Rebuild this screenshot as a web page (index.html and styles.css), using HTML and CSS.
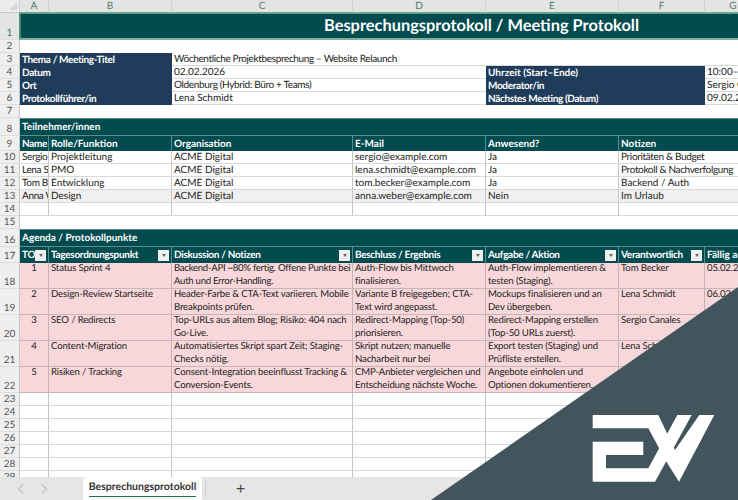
FILE: index.html
```html
<!DOCTYPE html>
<html lang="de">
  <head>
    <meta charset="UTF-8" />
    <meta name="viewport" content="width=device-width, initial-scale=1.0" />
    <title>Besprechungsprotokoll</title>
    <link rel="stylesheet" href="styles.css">
  </head>
  <body>
    <div class="sheet">
      <table class="grid">
        <colgroup>
          <col class="col-rh" /><col class="col-a" /><col class="col-b" /><col class="col-c" />
          <col class="col-d" /><col class="col-e" /><col class="col-f" /><col class="col-g" /><col class="col-h" />
        </colgroup>
        <tr class="h13">
          <th class="corner"><span class="corner-mark"></span></th>
          <th class="ch">A</th><th class="ch">B</th><th class="ch">C</th><th class="ch">D</th>
          <th class="ch">E</th><th class="ch">F</th><th class="ch">G</th><th class="ch">H</th>
        </tr>
        <tr class="h27">
          <th class="rh rh-on">1</th>
          <td colspan="8" class="title">Besprechungsprotokoll / Meeting Protokoll</td>
        </tr>
        <tr class="h12"><th class="rh">2</th><td colspan="8" class="blank"></td></tr>
        <tr class="h13">
          <th class="rh">3</th>
          <td colspan="2" class="navy">Thema / Meeting-Titel</td>
          <td colspan="6" class="val tight">Wöchentliche Projektbesprechung – Website Relaunch</td>
        </tr>
        <tr class="h13">
          <th class="rh">4</th>
          <td colspan="2" class="navy">Datum</td>
          <td colspan="2" class="val">02.02.2026</td>
          <td colspan="2" class="navy navy-plain">Uhrzeit (Start–Ende)</td>
          <td colspan="2" class="val">10:00–11:00</td>
        </tr>
        <tr class="h13">
          <th class="rh">5</th>
          <td colspan="2" class="navy">Ort</td>
          <td colspan="2" class="val tight">Oldenburg (Hybrid: Büro + Teams)</td>
          <td colspan="2" class="navy">Moderator/in</td>
          <td colspan="2" class="val">Sergio Canales</td>
        </tr>
        <tr class="h13">
          <th class="rh">6</th>
          <td colspan="2" class="navy">Protokollführer/in</td>
          <td colspan="2" class="val">Lena Schmidt</td>
          <td colspan="2" class="navy">Nächstes Meeting (Datum)</td>
          <td colspan="2" class="val">09.02.2026</td>
        </tr>
        <tr class="h13"><th class="rh">7</th><td colspan="8" class="blank"></td></tr>

        <tr class="h18"><th class="rh">8</th><td colspan="8" class="section">Teilnehmer/innen</td></tr>
        <tr class="h15">
          <th class="rh">9</th>
          <td class="head tight">Name</td><td class="head">Rolle/Funktion</td><td class="head">Organisation</td>
          <td class="head">E-Mail</td><td class="head">Anwesend?</td><td colspan="3" class="head">Notizen</td>
        </tr>
        <tr class="h13">
          <th class="rh">10</th>
          <td class="tight">Sergio Canales</td><td>Projektleitung</td><td>ACME Digital</td><td>sergio@example.com</td>
          <td>Ja</td><td colspan="3" class="tight">Prioritäten &amp; Budget</td>
        </tr>
        <tr class="h13">
          <th class="rh">11</th>
          <td class="tight">Lena Schmidt</td><td>PMO</td><td>ACME Digital</td><td>lena.schmidt@example.com</td>
          <td>Ja</td><td colspan="3" class="tight">Protokoll &amp; Nachverfolgung</td>
        </tr>
        <tr class="h13">
          <th class="rh">12</th>
          <td class="tight">Tom Becker</td><td>Entwicklung</td><td>ACME Digital</td><td>tom.becker@example.com</td>
          <td>Ja</td><td colspan="3">Backend / Auth</td>
        </tr>
        <tr class="h13 alt">
          <th class="rh">13</th>
          <td class="tight">Anna Weber</td><td>Design</td><td>ACME Digital</td><td>anna.weber@example.com</td>
          <td>Nein</td><td colspan="3">Im Urlaub</td>
        </tr>
        <tr class="h13">
          <th class="rh">14</th>
          <td></td><td></td><td></td><td></td><td></td><td colspan="3"></td>
        </tr>
        <tr class="h13"><th class="rh">15</th><td colspan="8" class="blank"></td></tr>

        <tr class="h18"><th class="rh">16</th><td colspan="8" class="section">Agenda / Protokollpunkte</td></tr>
        <tr class="h16">
          <th class="rh">17</th>
          <td class="head"><div class="filter-cell"><span class="filter-label">TOP</span><span class="filter-btn"></span></div></td>
          <td class="head"><div class="filter-cell"><span class="filter-label">Tagesordnungspunkt</span><span class="filter-btn"></span></div></td>
          <td class="head"><div class="filter-cell"><span class="filter-label">Diskussion / Notizen</span><span class="filter-btn"></span></div></td>
          <td class="head"><div class="filter-cell"><span class="filter-label">Beschluss / Ergebnis</span><span class="filter-btn"></span></div></td>
          <td class="head"><div class="filter-cell"><span class="filter-label">Aufgabe / Aktion</span><span class="filter-btn"></span></div></td>
          <td class="head"><div class="filter-cell"><span class="filter-label">Verantwortlich</span><span class="filter-btn"></span></div></td>
          <td class="head">Fällig am</td>
          <td class="head"></td>
        </tr>
        <tr class="h25 item">
          <th class="rh">18</th>
          <td class="num">1</td><td>Status Sprint 4</td>
          <td class="tight">Backend-API ~80% fertig. Offene Punkte bei<br>Auth und Error-Handling.</td>
          <td>Auth-Flow bis Mittwoch<br>finalisieren.</td>
          <td>Auth-Flow implementieren &amp;<br>testen (Staging).</td>
          <td>Tom Becker</td><td>05.02.2026</td><td></td>
        </tr>
        <tr class="h25 item">
          <th class="rh">19</th>
          <td class="num">2</td><td>Design-Review Startseite</td>
          <td>Header-Farbe &amp; CTA-Text variieren. Mobile<br>Breakpoints prüfen.</td>
          <td>Variante B freigegeben; CTA-<br>Text wird angepasst.</td>
          <td>Mockups finalisieren und an<br>Dev übergeben.</td>
          <td>Lena Schmidt</td><td>06.02.2026</td><td></td>
        </tr>
        <tr class="h25 item">
          <th class="rh">20</th>
          <td class="num">3</td><td>SEO / Redirects</td>
          <td>Top-URLs aus altem Blog; Risiko: 404 nach<br>Go-Live.</td>
          <td>Redirect-Mapping (Top-50)<br>priorisieren.</td>
          <td>Redirect-Mapping erstellen<br>(Top-50 URLs zuerst).</td>
          <td>Sergio Canales</td><td>06.02.2026</td><td></td>
        </tr>
        <tr class="h25 item">
          <th class="rh">21</th>
          <td class="num">4</td><td>Content-Migration</td>
          <td>Automatisiertes Skript spart Zeit; Staging-<br>Checks nötig.</td>
          <td>Skript nutzen; manuelle<br>Nacharbeit nur bei</td>
          <td>Export testen (Staging) und<br>Prüfliste erstellen.</td>
          <td>Lena Schmidt</td><td>07.02.2026</td><td></td>
        </tr>
        <tr class="h25 item">
          <th class="rh">22</th>
          <td class="num">5</td><td>Risiken / Tracking</td>
          <td>Consent-Integration beeinflusst Tracking &amp;<br>Conversion-Events.</td>
          <td>CMP-Anbieter vergleichen und<br>Entscheidung nächste Woche.</td>
          <td>Angebote einholen und<br>Optionen dokumentieren.</td>
          <td>Sergio Canales</td><td>08.02.2026</td><td></td>
        </tr>
        <tr class="h13"><th class="rh">23</th><td></td><td></td><td></td><td></td><td></td><td></td><td></td><td></td></tr>
        <tr class="h13"><th class="rh">24</th><td></td><td></td><td></td><td></td><td></td><td></td><td></td><td></td></tr>
        <tr class="h13"><th class="rh">25</th><td></td><td></td><td></td><td></td><td></td><td></td><td></td><td></td></tr>
        <tr class="h13"><th class="rh">26</th><td></td><td></td><td></td><td></td><td></td><td></td><td></td><td></td></tr>
        <tr class="h13"><th class="rh">27</th><td></td><td></td><td></td><td></td><td></td><td></td><td></td><td></td></tr>
        <tr class="h13"><th class="rh">28</th><td></td><td></td><td></td><td></td><td></td><td></td><td></td><td></td></tr>
        <tr class="h13"><th class="rh">29</th><td></td><td></td><td></td><td></td><td></td><td></td><td></td><td></td></tr>
      </table>
    </div>

    <div class="tabbar">
      <svg class="tab-arrow" width="8" height="12" viewBox="0 0 8 12"><path d="M6 1.5 1.5 6 6 10.5" /></svg>
      <svg class="tab-arrow tab-arrow-next" width="8" height="12" viewBox="0 0 8 12"><path d="M2 1.5 6.5 6 2 10.5" /></svg>
      <div class="tab"><span class="tab-label">Besprechungsprotokoll</span></div>
      <span class="tab-sep"></span>
      <span class="tab-add">+</span>
    </div>

    <svg class="brand" viewBox="0 0 738 500" width="738" height="500">
      <polygon class="brand-bg" points="738,287 738,500 431,500" />
      <polygon class="brand-mark" points="592.7,441.7 643.3,441.7 643.3,455 606,455 606,468.3 648.3,468.3 677.3,415 691.7,415 655,481.7 592.7,481.7" />
      <polygon class="brand-mark" points="592.7,415 658.3,415 675,450 699.3,415 714.3,415 679,481.7 667.3,463.3 648.3,428.3 592.7,428.3" />
    </svg>
  </body>
</html>
```

FILE: styles.css
```css
html,
body {
  margin: 0;
  height: 500px;
  overflow: hidden;
}

body {
  display: flex;
  flex-direction: column;
  width: 738px;
  font-family: Lato, "Liberation Sans", sans-serif;
  font-size: 10px;
  color: #222;
  background-color: #fff;
  text-rendering: geometricPrecision;
}

.sheet {
  flex: 1;
  min-height: 0;
  overflow: hidden;
}

.grid {
  table-layout: fixed;
  width: 942px;
  border-collapse: separate;
  border-spacing: 0;
}

.col-rh { width: 20px; }
.col-a { width: 29px; }
.col-b { width: 123px; }
.col-c { width: 181px; }
.col-d { width: 133px; }
.col-e { width: 133px; }
.col-f { width: 86px; }
.col-g { width: 57px; }
.col-h { width: 180px; }

.h12 { height: 12px; }
.h13 { height: 13px; }
.h15 { height: 15px; }
.h16 { height: 16px; }
.h18 { height: 18px; }
.h25 { height: 25px; }
.h27 { height: 27px; }

td,
th {
  box-sizing: border-box;
  padding: 0 2px;
  line-height: 12px;
  font-weight: normal;
  white-space: nowrap;
  overflow: hidden;
}

td {
  border-right: 1px solid #c6c6c6;
  border-bottom: 1px solid #d9d9d9;
}

.tight {
  letter-spacing: -0.35px;
}

.corner {
  position: relative;
  background-color: #ececec;
  border-right: 1px solid #d0d0d0;
  border-bottom: 1px solid #c8c8c8;
}

.corner-mark {
  position: absolute;
  right: 2px;
  bottom: 2px;
  border-style: solid;
  border-width: 0 0 8px 8px;
  border-color: transparent transparent #d6d6d6 transparent;
}

.ch {
  background-color: #e4e4e4;
  color: #50806a;
  font-size: 10px;
  text-align: center;
  border-right: 1px solid #d2d2d2;
  border-bottom: 1px solid #6fa88e;
}

.rh {
  padding: 0;
  background-color: #efefef;
  color: #555;
  font-size: 10px;
  text-align: center;
  vertical-align: bottom;
  border-right: 1px solid #c8c8c8;
  border-bottom: 1px solid #dedede;
}

.rh-on {
  color: #3f7f63;
  background-color: #e4e4e4;
  border-right: 1px solid #4f9075;
}

.title {
  padding: 0;
  background-color: #024b4f;
  color: #fff;
  font-size: 16.4px;
  font-weight: bold;
  text-align: center;
  border-top: 1px solid #5f9e88;
  border-left: 1px solid #3f8a6c;
  border-right: none;
  border-bottom: 2px solid #7fae9c;
}

.blank {
  border-right: none;
  border-bottom: none;
}

.navy {
  background-color: #1f3d5a;
  color: #fff;
  font-weight: bold;
  letter-spacing: -0.35px;
  border-right: none;
  border-bottom: none;
}

.navy-plain {
  letter-spacing: 0;
}

.val {
  border-right: none;
}

.section {
  background-color: #024b4f;
  color: #fff;
  font-weight: bold;
  border-right: none;
  border-bottom: 1px solid #5b8f8f;
  border-top: 1px solid #5b8f8f;
}

.head {
  background-color: #024b4f;
  color: #fff;
  font-weight: bold;
  border-right: 1px solid #5b8f8f;
  border-bottom: none;
}

.alt td {
  background-color: #f0f0f0;
}

.item td {
  background-color: #f8d7da;
  vertical-align: top;
  font-size: 9.6px;
  letter-spacing: -0.15px;
  line-height: 12.5px;
  border-right: 1px solid #c4b4b7;
  border-bottom: 1px solid #c9b5b8;
}

.item td.tight {
  letter-spacing: -0.28px;
}

.item .num {
  text-align: center;
}

.filter-cell {
  display: flex;
  align-items: center;
  justify-content: space-between;
}

.filter-label {
  flex: 1;
  min-width: 0;
  overflow: hidden;
  letter-spacing: -0.3px;
}

.filter-btn {
  flex: none;
  display: flex;
  align-items: center;
  justify-content: center;
  width: 11px;
  height: 11px;
  background-color: #f1f1f1;
}

.filter-btn::after {
  content: "";
  border-style: solid;
  border-width: 3px 2.5px 0 2.5px;
  border-color: #666 transparent transparent transparent;
}

.tabbar {
  flex: none;
  display: flex;
  align-items: center;
  height: 23px;
  background-color: #e6e6e6;
}

.tab-arrow {
  flex: none;
  margin-left: 17px;
  fill: none;
  stroke: #a8a8a8;
  stroke-width: 1;
}

.tab-arrow-next {
  margin-left: 15px;
}

.tab {
  flex: none;
  display: flex;
  justify-content: center;
  box-sizing: border-box;
  width: 119px;
  height: 23px;
  margin-left: 35px;
  padding-top: 3px;
  background-color: #fff;
  border-radius: 4px 4px 0 0;
}

.tab-label {
  height: 16px;
  line-height: 15px;
  font-size: 10.5px;
  font-weight: bold;
  color: #333;
  border-bottom: 1px solid #217346;
}

.tab-sep {
  flex: none;
  width: 1px;
  height: 14px;
  margin-left: 3px;
  background-color: #cfcfcf;
}

.tab-add {
  flex: none;
  margin-left: 30px;
  font-size: 16px;
  color: #444;
}

.brand {
  position: absolute;
  left: 0;
  top: 0;
  pointer-events: none;
}

.brand-bg {
  fill: #43555c;
}

.brand-mark {
  fill: #fff;
}
```
